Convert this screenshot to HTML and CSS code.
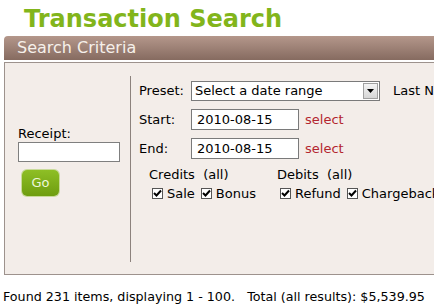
FILE: index.html
```html
<!DOCTYPE html>
<html>
<head>
<meta charset="utf-8">
<link rel="stylesheet" href="styles.css">
</head>
<body>
<h1 class="title">Transaction Search</h1>
<div class="bar">Search Criteria</div>
<div class="panel">
  <div class="left">
    <label class="rlabel">Receipt:</label>
    <div class="rinput"></div>
    <div class="go">Go</div>
  </div>
  <div class="right">
    <div class="row">
      <span class="lbl">Preset:</span>
      <div class="select"><span class="seltext">Select a date range</span><span class="arrow"><svg width="7" height="4" viewBox="0 0 7 4"><path d="M0 0H7L3.5 4Z" fill="#000"/></svg></span></div>
      <span class="extra">Last N</span>
    </div>
    <div class="row">
      <span class="lbl">Start:</span>
      <div class="date">2010-08-15</div>
      <span class="sel">select</span>
      <span class="extra2">E</span>
    </div>
    <div class="row">
      <span class="lbl">End:</span>
      <div class="date">2010-08-15</div>
      <span class="sel">select</span>
      <span class="extra3">I</span>
    </div>
    <div class="groups">
      <div class="group">
        <div class="ghead">Credits&nbsp; (all)</div>
        <div class="checks">
          <span class="cb"><svg width="9" height="9" viewBox="0 0 9 9"><path d="M1 4L3.5 6.5L8 1.5" fill="none" stroke="#000" stroke-width="2"/></svg></span><span class="ct">Sale</span>
          <span class="cb"><svg width="9" height="9" viewBox="0 0 9 9"><path d="M1 4L3.5 6.5L8 1.5" fill="none" stroke="#000" stroke-width="2"/></svg></span><span class="ct">Bonus</span>
        </div>
      </div>
      <div class="group g2">
        <div class="ghead">Debits&nbsp; (all)</div>
        <div class="checks">
          <span class="cb"><svg width="9" height="9" viewBox="0 0 9 9"><path d="M1 4L3.5 6.5L8 1.5" fill="none" stroke="#000" stroke-width="2"/></svg></span><span class="ct">Refund</span>
          <span class="cb"><svg width="9" height="9" viewBox="0 0 9 9"><path d="M1 4L3.5 6.5L8 1.5" fill="none" stroke="#000" stroke-width="2"/></svg></span><span class="ct">Chargeback</span>
        </div>
      </div>
    </div>
  </div>
</div>
<p class="found">Found 231 items, displaying 1 - 100.&nbsp;&nbsp; Total (all results): $5,539.95</p>
</body>
</html>
```

FILE: styles.css
```css
html, body {
  margin: 0;
  padding: 0;
  background: #ffffff;
  overflow: hidden;
}
body {
  font-family: "DejaVu Sans", Verdana, sans-serif;
  font-size: 13px;
  color: #000;
  width: 434px;
}
.title {
  margin: 0;
  padding: 4px 0 0 24px;
  height: 36px;
  box-sizing: border-box;
  font-size: 24px;
  line-height: 30px;
  font-weight: bold;
  color: #82b51b;
  white-space: nowrap;
}
.bar {
  margin-left: 4px;
  height: 24px;
  line-height: 23px;
  padding-left: 13px;
  font-size: 16px;
  color: #f6f0ea;
  background: linear-gradient(#b4978b, #866b60);
  border-top-left-radius: 4px;
  white-space: nowrap;
}
.panel {
  margin: 2px 0 0 4px;
  height: 213px;
  box-sizing: border-box;
  border: 1px solid #9d928d;
  border-right: none;
  background: #f3ede9;
  display: flex;
  padding: 13px 0 12px 0;
}
.left {
  width: 125px;
  flex: none;
  padding: 50px 0 0 13px;
  box-sizing: border-box;
  display: flex;
  flex-direction: column;
}
.rlabel {
  line-height: 16px;
  height: 16px;
}
.rinput {
  width: 102px;
  height: 20px;
  box-sizing: border-box;
  border: 1px solid #7f7f7f;
  background: #fff;
}
.go {
  margin: 8px 0 0 4px;
  width: 37px;
  height: 26px;
  border-radius: 5px;
  background: linear-gradient(#8ebf25, #6e9d10);
  color: #eef6da;
  text-align: center;
  line-height: 26px;
  font-size: 13px;
  box-shadow: 0 0 0 1px #c8da9a;
}
.right {
  flex: 1;
  border-left: 1px solid #8c827d;
  padding: 4px 0 0 8px;
  white-space: nowrap;
}
.row {
  display: flex;
  align-items: center;
  height: 21px;
  margin-bottom: 8px;
}
.lbl {
  width: 52px;
  flex: none;
}
.select {
  width: 189px;
  height: 20px;
  box-sizing: border-box;
  border: 1px solid #7a7a7a;
  background: #fff;
  display: flex;
  align-items: center;
  justify-content: space-between;
  padding-left: 3px;
}
.seltext {
  line-height: 18px;
}
.arrow {
  width: 15px;
  height: 16px;
  margin-right: 1px;
  box-sizing: border-box;
  border: 1px solid #a0a0a0;
  background: linear-gradient(#f4f4f4, #d6d6d6);
  display: flex;
  align-items: center;
  justify-content: center;
}
.extra {
  margin-left: 13px;
}
.date {
  width: 108px;
  height: 21px;
  box-sizing: border-box;
  border: 1px solid #7a7a7a;
  background: #fff;
  padding-left: 5px;
  line-height: 19px;
}
.sel {
  margin-left: 6px;
  color: #b3262f;
}
.extra2 {
  margin-left: 97px;
}
.extra3 {
  margin-left: 99px;
  color: #5a1010;
}
.groups {
  display: flex;
  padding-left: 10px;
  margin-top: 2px;
}
.group {
  width: 128px;
  flex: none;
}
.g2 {
  width: auto;
}
.ghead {
  line-height: 16px;
}
.checks {
  display: flex;
  align-items: center;
  height: 16px;
  margin-top: 2px;
  padding-left: 3px;
}
.cb {
  width: 11px;
  height: 11px;
  box-sizing: border-box;
  border: 1px solid #555;
  background: #fff;
  display: inline-flex;
  align-items: center;
  justify-content: center;
  margin-right: 4px;
}
.ct {
  margin-right: 6px;
}
.found {
  margin: 14px 0 0 3px;
  line-height: 16px;
  font-size: 12.7px;
  white-space: nowrap;
}
```
